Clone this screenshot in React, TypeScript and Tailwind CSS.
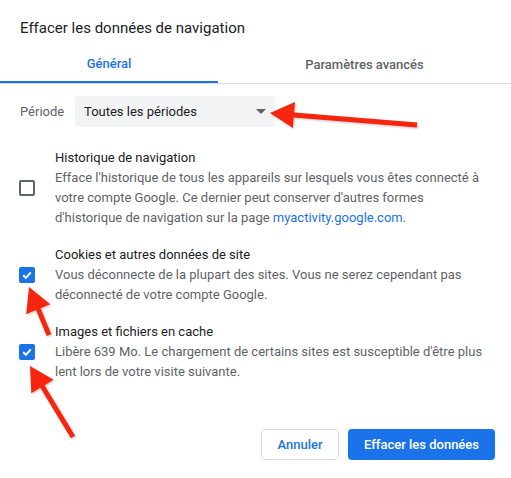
import React from 'react';

type Pt = [number, number];

// Build the outline of a flat arrow from tail to tip
function arrowPoints(tail: Pt, tip: Pt, headLen: number, headW: number, shaftW: number) {
  const dx = tip[0] - tail[0];
  const dy = tip[1] - tail[1];
  const len = Math.hypot(dx, dy);
  const ux = dx / len;
  const uy = dy / len;
  const px = -uy;
  const py = ux;
  const bx = tip[0] - ux * headLen;
  const by = tip[1] - uy * headLen;
  const pts: Pt[] = [
    [tail[0] + (px * shaftW) / 2, tail[1] + (py * shaftW) / 2],
    [bx + (px * shaftW) / 2, by + (py * shaftW) / 2],
    [bx + (px * headW) / 2, by + (py * headW) / 2],
    tip,
    [bx - (px * headW) / 2, by - (py * headW) / 2],
    [bx - (px * shaftW) / 2, by - (py * shaftW) / 2],
    [tail[0] - (px * shaftW) / 2, tail[1] - (py * shaftW) / 2],
  ];
  return pts.map((p) => p.join(',')).join(' ');
}

const arrows: { tail: Pt; tip: Pt }[] = [
  { tail: [417, 125], tip: [270, 113] },
  { tail: [49, 335], tip: [29, 287] },
  { tail: [73, 437], tip: [30, 366] },
];

function Checkbox({ checked }: { checked: boolean }) {
  if (!checked) {
    return <div className="w-[16px] h-[16px] rounded-[2px] border-2 border-[#5f6368]" />;
  }
  return (
    <div className="w-[16px] h-[16px] rounded-[2px] bg-[#1a73e8] flex items-center justify-center">
      <svg width="12" height="12" viewBox="0 0 12 12">
        <path d="M2.2 6.2 L4.9 8.8 L9.8 3.4" fill="none" stroke="white" strokeWidth="2" />
      </svg>
    </div>
  );
}

interface OptionProps {
  checked: boolean;
  title: string;
  children: React.ReactNode;
}

function Option({ checked, title, children }: OptionProps) {
  return (
    <div className="flex items-center pl-[19px] pr-6">
      <div className="w-[36px] shrink-0">
        <Checkbox checked={checked} />
      </div>
      <div className="text-[13px] leading-[20px]">
        <div className="text-[#202124]">{title}</div>
        <p className="text-[#5f6368]">{children}</p>
      </div>
    </div>
  );
}

export default function App() {
  return (
    <div className="relative w-[511px] h-[478px] bg-white overflow-hidden font-['Roboto',sans-serif]">
      {/* Header */}
      <h1 className="px-5 pt-4 text-[15px] leading-[24px] text-[#202124]">
        Effacer les données de navigation
      </h1>

      {/* Tabs */}
      <div className="mt-[6px] flex border-b border-[#dadce0]">
        <div className="w-[218px] h-[37px] flex items-center justify-center border-b-2 border-[#1a73e8] text-[13px] font-medium text-[#1a73e8]">
          Général
        </div>
        <div className="flex-1 h-[37px] flex items-center justify-center text-[13px] font-medium text-[#5f6368]">
          Paramètres avancés
        </div>
      </div>

      {/* Time range */}
      <div className="mt-3 flex items-center pl-5">
        <span className="w-[55px] text-[13px] text-[#5f6368]">Période</span>
        <div className="w-[200px] h-[31px] rounded-[4px] bg-[#f1f3f4] flex items-center justify-between pl-[9px] pr-[9px]">
          <span className="text-[13px] text-[#202124]">Toutes les périodes</span>
          <svg width="10" height="5" viewBox="0 0 10 5">
            <path d="M0 0 L10 0 L5 5 Z" fill="#5f6368" />
          </svg>
        </div>
      </div>

      {/* Options */}
      <div className="mt-[21px] flex flex-col gap-[17px]">
        <Option checked={false} title="Historique de navigation">
          Efface l'historique de tous les appareils sur lesquels vous êtes connecté à votre compte Google. Ce
          dernier peut conserver d'autres formes d'historique de navigation sur la page{' '}
          <a className="text-[#1a73e8]">myactivity.google.com</a>.
        </Option>
        <Option checked={true} title="Cookies et autres données de site">
          Vous déconnecte de la plupart des sites. Vous ne serez cependant pas déconnecté de votre compte Google.
        </Option>
        <Option checked={true} title="Images et fichiers en cache">
          Libère 639 Mo. Le chargement de certains sites est susceptible d'être plus lent lors de votre visite
          suivante.
        </Option>
      </div>

      {/* Footer buttons */}
      <div className="mt-[47px] flex justify-end gap-[9px] pr-4">
        <button className="w-[78px] h-[31px] rounded-[4px] border border-[#dadce0] bg-white text-[13px] font-medium text-[#1a73e8]">
          Annuler
        </button>
        <button className="w-[147px] h-[31px] rounded-[4px] bg-[#1a73e8] text-[13px] font-medium text-white">
          Effacer les données
        </button>
      </div>

      {/* Annotation arrows */}
      <svg className="absolute inset-0 pointer-events-none" width="511" height="478">
        <defs>
          <filter id="sh" x="-20%" y="-20%" width="140%" height="140%">
            <feDropShadow dx="1" dy="1" stdDeviation="1" floodColor="#000" floodOpacity="0.25" />
          </filter>
        </defs>
        {arrows.map((a, i) => (
          <polygon
            key={i}
            points={arrowPoints(a.tail, a.tip, 24, 26, 5)}
            fill="#f5260f"
            filter="url(#sh)"
          />
        ))}
      </svg>
    </div>
  );
}
